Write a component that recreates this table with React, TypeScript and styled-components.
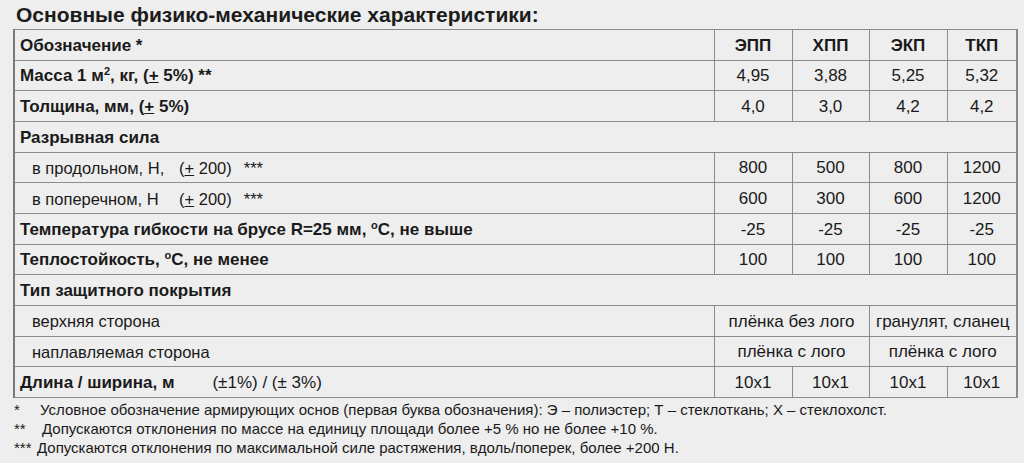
import styled, {createGlobalStyle} from "styled-components";

const GlobalStyle = createGlobalStyle`
  html, body {
    margin: 0;
    padding: 0;
    background: #eeeeee;
  }
  body {
    font-family: "Liberation Sans", Arial, sans-serif;
    color: #1a1a1a;
  }
`;

const Page = styled.div`
  width: 1024px;
  height: 463px;
  box-sizing: border-box;
  padding: 3px 8px 0 13px;
  overflow: hidden;
`;

const Title = styled.h2`
  margin: 0 0 3px 3px;
  font-size: 21px;
  line-height: 23px;
  font-weight: bold;
  color: #1c1c1c;
`;

const Table = styled.table`
  width: 1003px;
  border-collapse: collapse;
  table-layout: fixed;
  border-left: 2px solid #7a7a7a;
  border-right: 2px solid #8a8a8a;
`;

const Row = styled.tr`
  height: 30.67px;
`;

const Cell = styled.td<{ $bold?: boolean; $center?: boolean; $indent?: boolean }>`
  border: 1px solid #8c8c8c;
  padding: 2px 0 0 ${p => (p.$center ? "0" : p.$indent ? "17px" : "5px")};
  text-align: ${p => (p.$center ? "center" : "left")};
  font-size: ${p => (p.$indent ? "16.5px" : "17px")};
  font-weight: ${p => (p.$bold ? "bold" : "normal")};
  white-space: nowrap;
  vertical-align: middle;
  color: #1a1a1a;
`;

const Label = styled.span`
  display: inline-block;
  width: 147px;
`;

const Stars = styled.span`
  margin-left: 12px;
`;

const Sup = styled.sup`
  font-size: 11px;
  line-height: 0;
  vertical-align: 6px;
`;

const Plain = styled.span`
  font-weight: normal;
  display: inline-block;
  margin-left: 38px;
`;

const Notes = styled.div`
  margin-top: 2px;
  font-size: 15px;
  line-height: 19px;
  color: #1a1a1a;
`;

const Note = styled.div`
  display: flex;
  margin-left: 1px;
`;

const Mark = styled.span<{ $w: number }>`
  display: inline-block;
  width: ${p => p.$w}px;
  flex: none;
`;

const PM = () => <u>+</u>;

const values = (v: string[]) => v.map((x, i) => <Cell key={i} $center>{x}</Cell>);

const App = () => (
    <>
        <GlobalStyle/>
        <Page>
            <Title>Основные физико-механические характеристики:</Title>
            <Table>
                <colgroup>
                    <col style={{width: 700}}/>
                    <col style={{width: 78}}/>
                    <col style={{width: 77}}/>
                    <col style={{width: 78}}/>
                    <col style={{width: 70}}/>
                </colgroup>
                <tbody>
                <Row>
                    <Cell $bold>Обозначение *</Cell>
                    <Cell $bold $center>ЭПП</Cell>
                    <Cell $bold $center>ХПП</Cell>
                    <Cell $bold $center>ЭКП</Cell>
                    <Cell $bold $center>ТКП</Cell>
                </Row>
                <Row>
                    <Cell $bold>Масса 1 м<Sup>2</Sup>, кг, (<PM/> 5%) **</Cell>
                    {values(["4,95", "3,88", "5,25", "5,32"])}
                </Row>
                <Row>
                    <Cell $bold>Толщина, мм, (<PM/> 5%)</Cell>
                    {values(["4,0", "3,0", "4,2", "4,2"])}
                </Row>
                <Row>
                    <Cell $bold colSpan={5}>Разрывная сила</Cell>
                </Row>
                <Row>
                    <Cell $indent><Label>в продольном, Н,</Label>(<PM/> 200)<Stars>***</Stars></Cell>
                    {values(["800", "500", "800", "1200"])}
                </Row>
                <Row>
                    <Cell $indent><Label>в поперечном, Н</Label>(<PM/> 200)<Stars>***</Stars></Cell>
                    {values(["600", "300", "600", "1200"])}
                </Row>
                <Row>
                    <Cell $bold>Температура гибкости на брусе R=25 мм, <Sup>o</Sup>C, не выше</Cell>
                    {values(["-25", "-25", "-25", "-25"])}
                </Row>
                <Row>
                    <Cell $bold>Теплостойкость, <Sup>o</Sup>C, не менее</Cell>
                    {values(["100", "100", "100", "100"])}
                </Row>
                <Row>
                    <Cell $bold colSpan={5}>Тип защитного покрытия</Cell>
                </Row>
                <Row>
                    <Cell $indent>верхняя сторона</Cell>
                    <Cell $center colSpan={2}>плёнка без лого</Cell>
                    <Cell $center colSpan={2}>гранулят, сланец</Cell>
                </Row>
                <Row>
                    <Cell $indent>наплавляемая сторона</Cell>
                    <Cell $center colSpan={2}>плёнка с лого</Cell>
                    <Cell $center colSpan={2}>плёнка с лого</Cell>
                </Row>
                <Row>
                    <Cell $bold>Длина / ширина, м<Plain>(±1%) / (± 3%)</Plain></Cell>
                    {values(["10x1", "10x1", "10x1", "10x1"])}
                </Row>
                </tbody>
            </Table>
            <Notes>
                <Note><Mark $w={26}>*</Mark>Условное обозначение армирующих основ (первая буква обозначения): Э – полиэстер; Т – стеклоткань; Х – стеклохолст.</Note>
                <Note><Mark $w={28}>**</Mark>Допускаются отклонения по массе на единицу площади более +5 % но не более +10 %.</Note>
                <Note><Mark $w={23}>***</Mark>Допускаются отклонения по максимальной силе растяжения, вдоль/поперек, более +200 Н.</Note>
            </Notes>
        </Page>
    </>
);

export default App;
